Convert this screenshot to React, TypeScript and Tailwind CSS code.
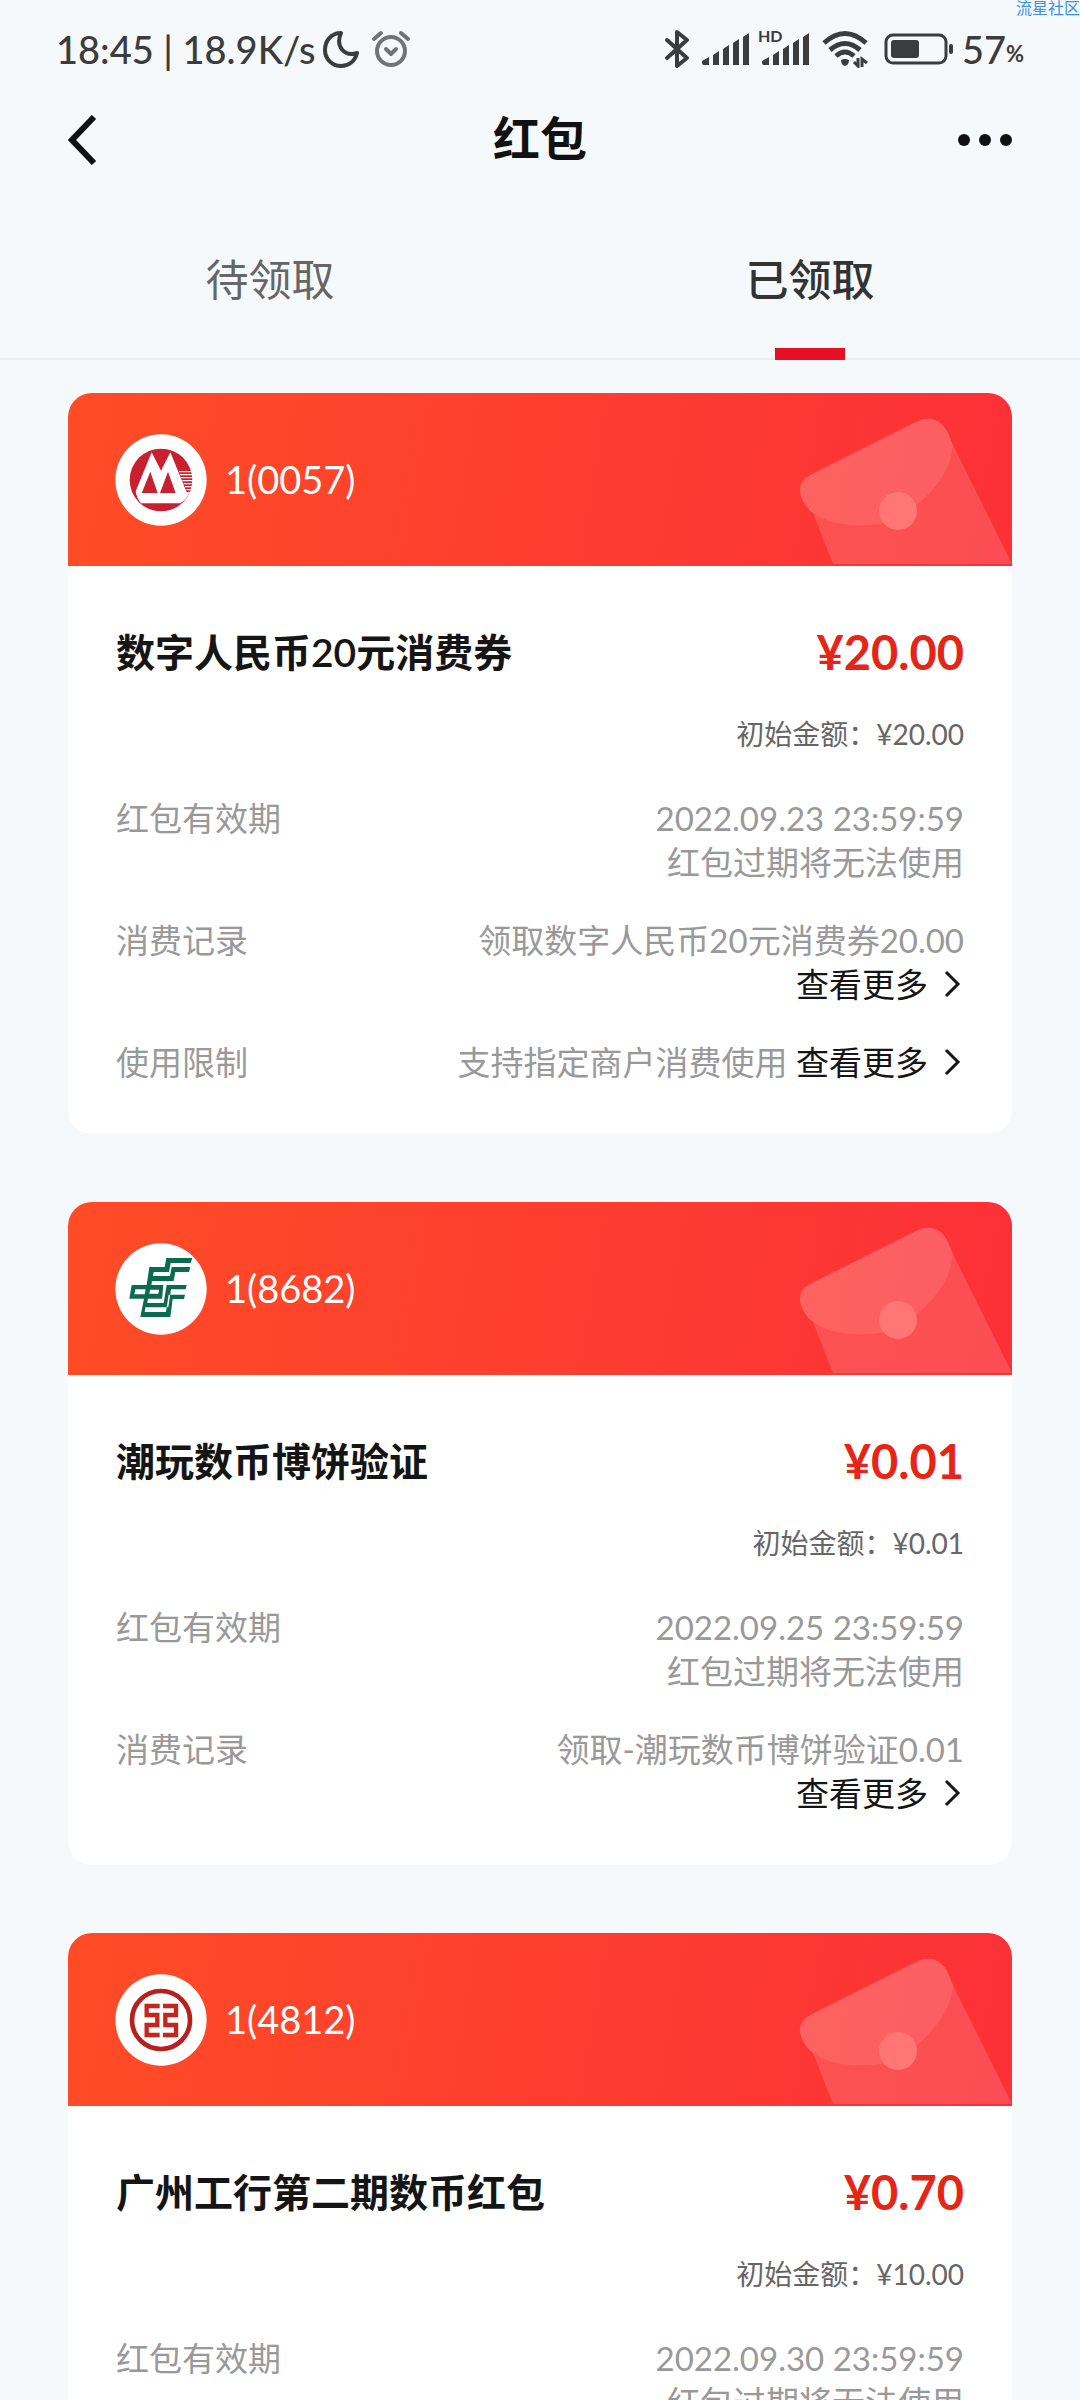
import type { ReactNode } from 'react';

type Row = {
  label: string;
  lines: string[];
  more?: 'inline' | 'below';
};

type Packet = {
  id: string;
  account: string;
  logo: ReactNode;
  title: string;
  amount: string;
  initial: string;
  rows: Row[];
};

function CmbLogo() {
  return (
    <svg viewBox="-16 -20 276 276" className="size-[92px]" aria-hidden="true">
      <circle cx="122" cy="118" r="137" fill="#fff" />
      <circle cx="122" cy="118" r="94" fill="#c8202f" />
      <path d="M94 35 L122 90 L150 35 L199 155 L216 153 L206 158 C200 172 190 182 180 188 H62 C54 178 48 166 46 152 Z" fill="#fff" />
      <path d="M90 93 L112 157 H64 Z M143 93 L166 157 H119 Z" fill="#c8202f" />
      <path d="M176 93 H216 M179 102 H218 M182 111 H218 M186 120 H218 M190 129 H218 M194 138 H217 M198 147 H216" stroke="#fff" strokeWidth="4" />
    </svg>
  );
}

function PostLogo() {
  return (
    <svg viewBox="-15 -6 276 276" className="size-[92px]" aria-hidden="true">
      <circle cx="123" cy="132" r="137" fill="#fff" />
      <path
        d="M139 39 H217 L212 54 H152 L147 81 H101 L99 93 H150 L155 66 H211 L207 81 H166 L161 108 H96 L94 120 H80 L88 66 H134 Z"
        fill="#0c6a4f"
      />
      <path
        fillRule="evenodd"
        d="M140 120 H200 L197 133 H153 L145 187 H76 L74 201 H138 L146 149 H195 L192 162 H158 L151 216 H61 L72 161 H28 L35 120 H130 L126 161 H84 L82 174 H131 Z M46 133 L43 148 H74 L77 133 Z M90 134 L88 146 H115 L117 134 Z"
        fill="#0c6a4f"
      />
    </svg>
  );
}

function IcbcLogo() {
  return (
    <svg viewBox="164 160 276 276" className="size-[92px]" aria-hidden="true">
      <circle cx="302" cy="298" r="137" fill="#fff" />
      <circle cx="302" cy="298" r="87" fill="none" stroke="#b8201f" strokeWidth="14" />
      <path
        d="M298 256 H259 V283 H291 V313 H259 V343 H298 M308 256 H347 V283 H315 V313 H347 V343 H308"
        fill="none"
        stroke="#c4261c"
        strokeWidth="13"
      />
    </svg>
  );
}

const packets: Packet[] = [
  {
    id: '0057',
    account: '1(0057)',
    logo: <CmbLogo />,
    title: '数字人民币20元消费券',
    amount: '¥20.00',
    initial: '¥20.00',
    rows: [
      { label: '红包有效期', lines: ['2022.09.23 23:59:59', '红包过期将无法使用'] },
      { label: '消费记录', lines: ['领取数字人民币20元消费券20.00'], more: 'below' },
      { label: '使用限制', lines: ['支持指定商户消费使用'], more: 'inline' },
    ],
  },
  {
    id: '8682',
    account: '1(8682)',
    logo: <PostLogo />,
    title: '潮玩数币博饼验证',
    amount: '¥0.01',
    initial: '¥0.01',
    rows: [
      { label: '红包有效期', lines: ['2022.09.25 23:59:59', '红包过期将无法使用'] },
      { label: '消费记录', lines: ['领取-潮玩数币博饼验证0.01'], more: 'below' },
    ],
  },
  {
    id: '4812',
    account: '1(4812)',
    logo: <IcbcLogo />,
    title: '广州工行第二期数币红包',
    amount: '¥0.70',
    initial: '¥10.00',
    rows: [{ label: '红包有效期', lines: ['2022.09.30 23:59:59', '红包过期将无法使用'] }],
  },
];

function SignalIcon() {
  return (
    <svg width="48" height="34" viewBox="0 0 48 34" fill="#3c3c3c" aria-hidden="true">
      <path d="M0 29 L7 25 V33 H2 Q0 33 0 31 Z M11 23 L17 19 V33 H11 Z M21 17 L27 13 V33 H21 Z M31 11 L37 7 V33 H31 Z M41 5 L47 1 V33 H41 Z" />
    </svg>
  );
}

function StatusBar() {
  return (
    <div className="relative flex h-[98px] items-center justify-between px-14 text-[38px] font-medium text-[#3c3c3c]">
      <div className="flex items-center">
        <span>18:45 | 18.9K/s</span>
        <svg width="36" height="38" viewBox="0 0 36 38" className="ml-2" fill="none" stroke="#3c3c3c" strokeWidth="4" strokeLinejoin="round" aria-hidden="true">
          <path d="M18 3 C8 3 2 11 2 20 C2 29 9 36 18 36 C26 36 32 31 34 23 C22 27 12 17 18 3 Z" />
        </svg>
        <svg width="40" height="38" viewBox="0 0 40 38" className="ml-3" fill="none" stroke="#6f7474" strokeWidth="4" strokeLinecap="round" strokeLinejoin="round" aria-hidden="true">
          <circle cx="20" cy="21" r="14" />
          <path d="M3 9 L10 3 M37 9 L30 3 M15 19 L20 24 L25 19" />
        </svg>
      </div>
      <div className="flex items-center">
        <svg width="26" height="40" viewBox="0 0 26 40" fill="none" stroke="#3c3c3c" strokeWidth="4" strokeLinecap="round" strokeLinejoin="round" aria-hidden="true">
          <path d="M3 11 L23 29 L13 37 V3 L23 11 L3 29" />
        </svg>
        <span className="ml-3">
          <SignalIcon />
        </span>
        <span className="relative ml-3">
          <SignalIcon />
          <span className="absolute -top-1 -left-1 text-[16px] leading-[16px] font-bold">HD</span>
        </span>
        <svg width="46" height="38" viewBox="0 0 46 38" className="ml-3" fill="none" stroke="#3c3c3c" strokeWidth="5" aria-hidden="true">
          <path d="M2 13 Q23 -6 44 13 M8 20 Q23 7 38 20 M14 26 Q23 18 32 26" />
          <path d="M19 30 Q23 28 27 30 Q27 35 23 36 Q19 35 19 30 Z" fill="#3c3c3c" stroke="none" />
          <path d="M36 28 V36 L32 32 M40 37 V29 L45 33" strokeWidth="3" />
        </svg>
        <svg width="70" height="32" viewBox="0 0 70 32" className="ml-4" aria-hidden="true">
          <rect x="2" y="2" width="60" height="28" rx="7" fill="none" stroke="#3c3c3c" strokeWidth="3" />
          <rect x="7" y="7" width="28" height="18" rx="3" fill="#3c3c3c" />
          <rect x="65" y="11" width="4" height="10" rx="2" fill="#3c3c3c" />
        </svg>
        <span className="ml-2">57</span>
        <span className="pt-2 text-[22px] font-bold">%</span>
      </div>
      <span className="absolute top-0 left-full -ml-16 w-16 text-[16px] leading-4 font-normal whitespace-nowrap text-[#3b8fe8]">流星社区</span>
    </div>
  );
}

function Envelope() {
  return (
    <svg width="220" height="173" viewBox="0 0 220 173" className="absolute right-0 bottom-0" fill="#fff" aria-hidden="true">
      <path d="M21 120 C34 130 60 136 96 130 L125 112 C146 94 159 76 161 52 L220 171 H41 Z" fillOpacity="0.14" />
      <path d="M10 106 Q3 90 18 82 L126 28 Q146 20 156 40 L161 52 C159 76 146 94 125 112 L96 130 C60 136 34 130 21 120 Q14 115 10 106 Z" fillOpacity="0.22" />
      <circle cx="106" cy="118" r="19" fill="#ff7675" />
    </svg>
  );
}

function MoreLink() {
  return (
    <a href="#more" className="inline-flex items-center text-[#151515]">
      查看更多
      <svg width="24" height="30" viewBox="0 0 24 30" className="ml-3" fill="none" stroke="#151515" strokeWidth="3" aria-hidden="true">
        <path d="M6 3 L18 15 L6 27" />
      </svg>
    </a>
  );
}

function PacketCard({ packet }: { packet: Packet }) {
  return (
    <article className="overflow-hidden rounded-3xl bg-white">
      <div className="relative flex h-[173px] items-center gap-[18px] bg-linear-[100deg] from-[#ff4c26] to-[#fb3038] px-[47px]">
        {packet.logo}
        <span className="text-[38px] text-white">{packet.account}</span>
        <Envelope />
      </div>
      <div className="px-12 pt-[54px] pb-[50px]">
        <div className="flex h-16 items-center justify-between">
          <h2 className="text-[39px] font-semibold text-[#151515]">{packet.title}</h2>
          <span className="text-[47px] font-bold text-[#e62517]">{packet.amount}</span>
        </div>
        <p className="mt-7 text-right text-[28px] leading-[44px] text-[#666]">初始金额：{packet.initial}</p>
        <dl className="mt-10 flex flex-col gap-[34px] text-[33px] leading-[44px] text-[#999]">
          {packet.rows.map((row) => (
            <div key={row.label} className="flex justify-between">
              <dt>{row.label}</dt>
              <dd className="text-right">
                {row.lines.map((line) => (
                  <p key={line}>
                    {line}
                    {row.more === 'inline' && (
                      <>
                        {' '}
                        <MoreLink />
                      </>
                    )}
                  </p>
                ))}
                {row.more === 'below' && <MoreLink />}
              </dd>
            </div>
          ))}
        </dl>
      </div>
    </article>
  );
}

function App() {
  return (
    <div className="h-screen overflow-hidden bg-[#f5f9fc] font-['Lato','Noto_Sans_CJK_SC',sans-serif]" lang="zh-CN">
      <StatusBar />
      <header className="grid h-[84px] grid-cols-3 items-center px-14">
        <button type="button" aria-label="返回" className="justify-self-start px-3">
          <svg width="29" height="50" viewBox="0 0 29 50" fill="none" stroke="#111" strokeWidth="6" aria-hidden="true">
            <path d="M26 2 L4 25 L26 48" />
          </svg>
        </button>
        <h1 className="pb-1 text-center text-[47px] font-bold text-[#111]">红包</h1>
        <button type="button" aria-label="更多" className="justify-self-end px-3">
          <svg width="54" height="12" viewBox="0 0 54 12" fill="#111" aria-hidden="true">
            <circle cx="6" cy="6" r="6" />
            <circle cx="27" cy="6" r="6" />
            <circle cx="48" cy="6" r="6" />
          </svg>
        </button>
      </header>
      <nav className="flex h-[178px] border-b-2 border-[#eceff2] text-[43px]">
        <button type="button" className="flex-1 pt-6 pb-1 text-[#666]">
          待领取
        </button>
        <button type="button" className="relative flex-1 pt-6 pb-1 font-medium text-[#333]">
          已领取
          <span className="absolute -bottom-0.5 left-1/2 h-3 w-[70px] -translate-x-1/2 bg-[#e60f24]" />
        </button>
      </nav>
      <main className="flex flex-col gap-[68px] px-[68px] pt-[33px]">
        {packets.map((packet) => (
          <PacketCard key={packet.id} packet={packet} />
        ))}
      </main>
    </div>
  );
}

export default App;
